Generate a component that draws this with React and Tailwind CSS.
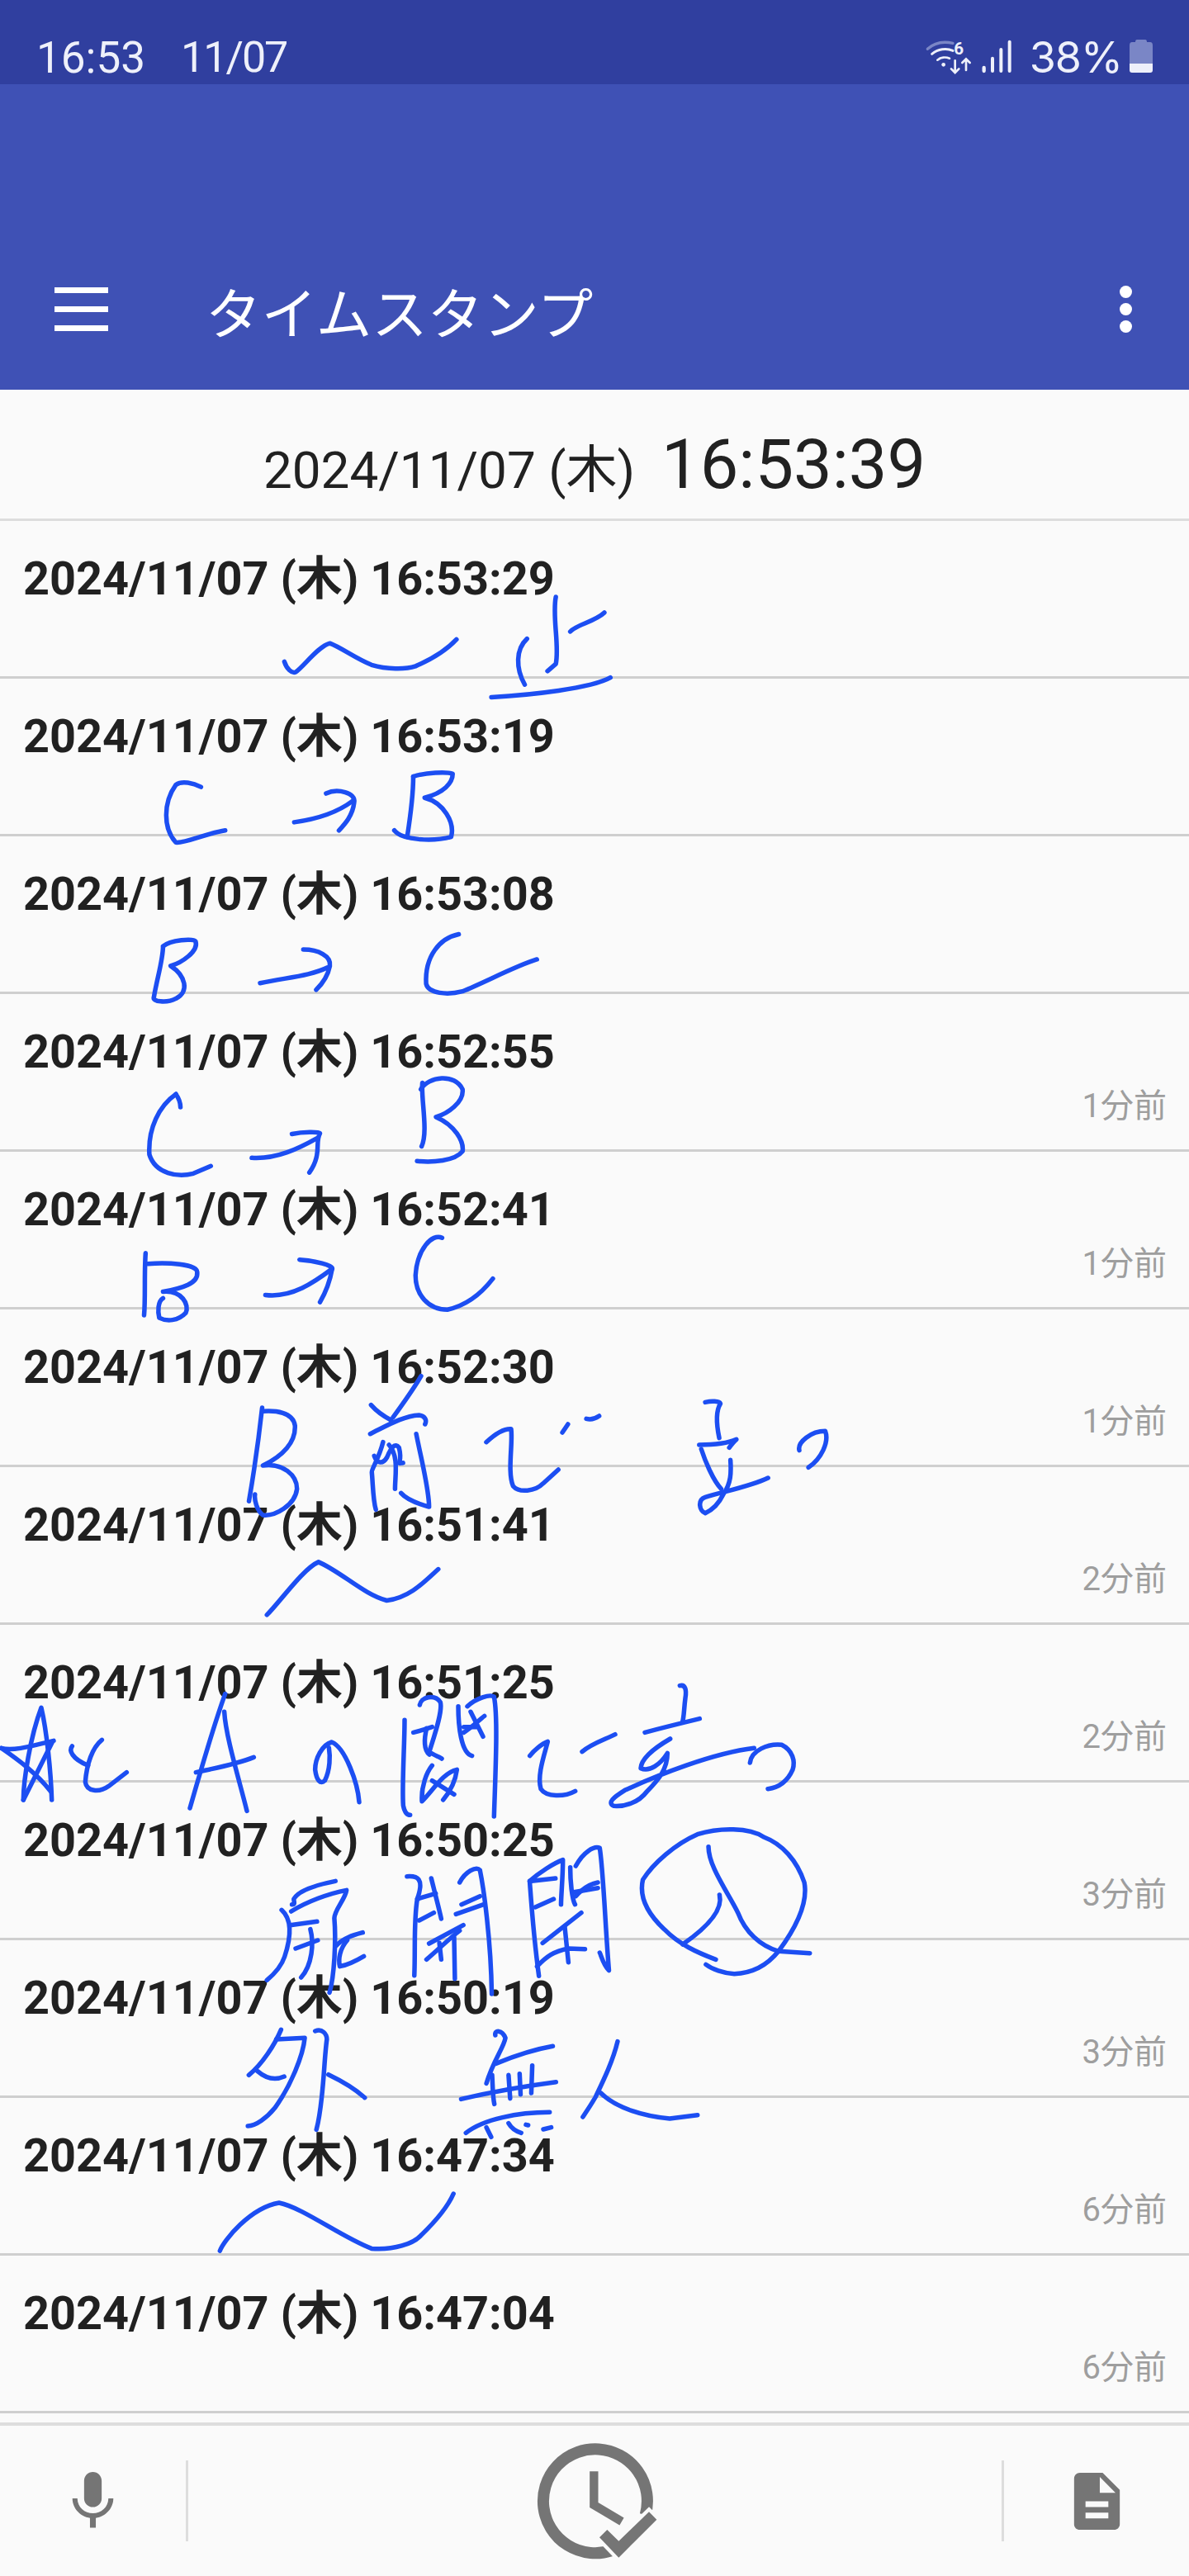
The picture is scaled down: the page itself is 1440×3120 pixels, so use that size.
import React from 'react';

const rows = [
  { time: '16:53:29', ago: '' },
  { time: '16:53:19', ago: '' },
  { time: '16:53:08', ago: '' },
  { time: '16:52:55', ago: '1分前' },
  { time: '16:52:41', ago: '1分前' },
  { time: '16:52:30', ago: '1分前' },
  { time: '16:51:41', ago: '2分前' },
  { time: '16:51:25', ago: '2分前' },
  { time: '16:50:25', ago: '3分前' },
  { time: '16:50:19', ago: '3分前' },
  { time: '16:47:34', ago: '6分前' },
  { time: '16:47:04', ago: '6分前' },
];

// handwriting, traced per crop of the screenshot: [x, y, scaleX, scaleY, paths]
const ink = [
  [0, 640, 1.0889, 2.529, [
    'M375 408 C378 430 385 445 390 440 C400 425 420 360 435 352 C450 365 470 400 490 418 C510 432 535 432 548 422 C570 400 590 370 602 340',
    'M733 210 C728 270 738 360 733 415 L722 437',
    'M695 338 C680 370 680 430 692 478',
    'M752 316 C760 295 785 285 797 258',
    'M648 517 C700 510 780 490 805 457',
    'M265 792 C255 780 240 772 232 785 C215 840 215 920 232 962 C245 965 270 935 297 925',
    'M388 900 C420 890 445 870 465 835',
    'M430 812 C445 795 470 810 467 840 C465 880 455 905 447 925',
    'M545 760 C560 748 590 745 597 752 C597 780 585 810 560 825 C585 840 600 900 595 945 C570 960 530 955 520 925',
    'M545 760 C545 820 540 900 537 945',
    'M215 1280 C225 1260 255 1255 258 1265 C262 1295 240 1330 225 1340 C245 1370 250 1420 232 1440 C220 1455 200 1450 203 1435 C207 1380 215 1320 215 1280',
    'M343 1393 C380 1375 410 1370 432 1345',
    'M400 1290 C420 1290 437 1310 435 1340 C432 1375 425 1395 417 1413',
    'M605 1243 C580 1255 560 1310 562 1395 C565 1425 590 1430 610 1418 C640 1390 680 1340 708 1320',
  ]],
  [0, 1260, 1.0889, 2.529, [
    'M232 165 C235 175 238 190 238 205',
    'M232 165 C210 200 195 270 197 350 C205 410 235 420 255 408 L278 385',
    'M332 360 C365 365 395 330 418 300',
    'M385 287 C400 280 420 280 422 285 C415 310 425 350 408 405',
    'M555 150 C565 110 600 100 610 150 C612 190 590 225 575 235 C600 260 612 310 610 340 C600 370 570 375 550 370',
    'M557 130 C555 180 565 280 556 325',
    'M192 652 C190 720 192 790 190 842',
    'M195 685 C220 680 260 685 260 710 C262 745 240 760 215 770 C240 765 250 810 245 835 C235 860 220 862 210 850 C208 830 208 800 215 790',
    'M350 780 C385 790 415 740 438 700',
    'M395 672 C415 675 440 690 438 700 C435 740 430 770 422 802',
    'M583 605 C570 590 550 640 548 720 C548 780 565 825 590 825 C620 810 640 760 650 730',
  ]],
  [270, 1640, 2.063, 3, [
    'M98 195 C90 300 75 450 65 535',
    'M100 208 C130 205 175 210 180 260 C182 320 150 370 100 405 C150 395 185 440 185 490 C180 550 130 590 100 585 C85 570 78 530 80 510',
    'M495 80 C475 130 450 180 425 230',
    'M370 185 C385 210 400 225 420 240',
    'M368 290 C410 260 450 225 490 222 C505 225 510 240 505 255',
    'M400 320 C390 380 370 420 372 430 C375 480 375 530 382 565',
    'M378 370 C385 400 400 400 410 375 C420 340 430 320 440 340 C450 400 430 400 450 395',
    'M415 330 C440 370 430 440 430 490',
    'M483 290 C495 380 515 490 515 555 C490 545 460 530 445 505',
    'M658 320 C680 290 700 270 720 272 C725 320 710 430 725 480 C740 505 780 500 800 470 L838 420',
    'M848 285 L862 255',
    'M908 235 C920 240 930 235 940 225',
    'M1205 175 C1220 170 1240 170 1243 180 C1230 210 1235 270 1240 305',
    'M1190 330 C1220 330 1260 325 1283 310 C1275 320 1270 330 1265 340',
    'M1195 345 C1205 390 1225 460 1245 490',
    'M1268 385 C1270 430 1270 470 1250 510 C1240 540 1225 565 1205 578 C1190 570 1185 530 1205 520 C1250 500 1320 480 1362 450',
    'M1440 350 C1435 320 1470 280 1505 280 C1515 320 1495 380 1463 412',
  ]],
  [0, 1880, 1.0889, 2.529, [
    'M352 192 C370 150 400 50 420 30 C450 60 480 130 510 148 C540 140 560 90 578 52',
  ]],
  [0, 2030, 3, 3, [
    'M85 450 C85 380 110 220 150 115 C170 200 185 350 188 450',
    'M5 262 C50 275 130 250 195 235',
    'M5 262 C60 300 130 350 185 420',
    'M85 450 C110 400 150 320 190 240',
    'M262 255 C250 270 260 300 320 325',
    'M370 232 C335 260 315 320 310 385 C315 420 360 425 395 400 L460 350',
    'M818 65 C780 170 730 340 690 480',
    'M815 130 C820 220 870 380 897 490',
    'M712 350 C780 335 860 320 922 295',
    'M1305 458 C1300 390 1255 260 1205 240 C1170 250 1145 300 1145 340 C1150 380 1165 395 1180 380 C1200 340 1200 290 1195 260',
  ]],
  [480, 2030, 3, 3, [
    'M30 160 C30 250 20 400 25 470 C30 495 40 505 50 505',
    'M85 105 C90 75 140 65 160 95 C170 130 130 240 120 275 C130 285 160 295 165 300',
    'M62 205 C85 200 115 190 130 185',
    'M110 190 C100 230 100 270 120 285',
    'M225 110 C225 180 235 280 275 290',
    'M258 110 C290 80 340 65 355 75 C370 150 360 350 355 510',
    'M245 205 C270 190 300 160 320 145',
    'M270 130 L315 220',
    'M245 185 L290 185',
    'M130 325 C110 350 90 400 93 455 C130 420 170 350 220 340 C215 380 195 420 170 450',
    'M130 380 L210 430',
    'M485 290 C500 270 530 245 550 238 C540 280 510 360 525 410 C545 440 610 440 650 418',
    'M675 275 C710 245 760 230 795 212',
    'M1030 35 C1050 30 1055 50 1050 80 C1045 120 1045 150 1040 165',
    'M903 205 C960 190 1040 170 1102 155',
    'M995 228 C940 260 890 300 888 335 C920 350 960 320 985 280 C985 340 950 380 910 420 C880 460 830 475 790 472 C765 460 790 440 830 415 C950 360 1150 280 1300 262',
    'M1285 315 C1290 270 1350 245 1400 250 C1440 270 1450 310 1440 340 C1420 385 1390 405 1350 410',
  ]],
  [300, 2200, 2.24, 3, [
    'M238 235 C200 245 140 265 125 300 C125 310 130 320 120 320',
    'M118 345 C160 310 220 280 268 268 C265 300 235 340 235 370 C240 450 235 580 222 640',
    'M92 340 C125 380 115 450 100 510 C90 550 70 575 52 595',
    'M115 395 L188 382',
    'M130 480 L190 450',
    'M170 410 C180 460 175 540 145 585',
    'M240 470 C260 440 290 430 312 422',
    'M270 450 C250 480 245 520 250 545 C270 540 300 520 315 508',
    'M432 218 C460 215 480 225 460 300 C450 380 455 480 452 578',
    'M460 300 L510 280',
    'M465 378 L505 350',
    'M498 225 C510 290 520 340 525 372',
    'M575 240 C590 200 620 180 630 195 C640 260 660 450 662 645',
    'M580 320 L630 290',
    'M565 355 L640 320',
    'M492 462 L585 395',
    'M485 520 C520 480 550 440 575 415',
    'M560 440 L562 590',
    'M520 460 L525 520',
    'M765 235 C790 205 830 170 855 158 C855 220 850 290 850 320',
    'M765 235 C770 330 780 480 790 580',
    'M770 235 L835 225',
    'M780 330 L830 300',
    'M875 185 C875 240 880 300 888 320',
    'M890 180 C910 130 940 105 955 115 C965 200 970 400 980 560 C965 540 960 510 955 495',
    'M890 290 C910 260 930 245 950 240',
    'M885 275 L950 260',
    'M800 460 L905 350',
    'M785 545 C810 510 830 490 870 480 L915 482',
    'M860 400 L870 530',
    'M1270 520 C1220 495 1170 465 1130 410 C1090 360 1060 300 1072 230 C1100 170 1160 100 1220 65 C1280 40 1360 40 1400 75 C1450 100 1490 160 1510 240 C1520 310 1490 400 1440 490 C1410 540 1370 570 1320 572 C1290 570 1260 555 1243 538',
    'M1250 110 C1250 180 1300 270 1330 350 C1350 420 1390 470 1440 490 L1525 497',
    'M1280 285 C1290 340 1250 400 1180 465',
  ]],
  [260, 2380, 2.613, 3, [
    'M210 235 C190 290 150 360 108 400',
    'M135 385 C160 410 190 420 220 405',
    'M195 270 L285 265 C280 330 240 440 190 520 C165 555 130 585 105 585',
    'M318 240 C340 230 355 250 355 270 C345 350 345 500 322 598',
    'M360 398 C400 420 440 445 475 482',
    'M888 255 C885 235 910 235 920 265 C915 300 880 350 860 430',
    'M890 358 C950 330 1020 305 1070 295',
    'M780 487 C880 460 980 440 1080 425',
    'M878 400 C880 440 880 480 885 505',
    'M930 400 L935 485',
    'M965 395 L968 470',
    'M1005 365 L1002 465',
    'M795 610 C850 560 960 535 1060 535',
    'M860 590 L875 625',
    'M930 575 C940 595 955 605 970 610',
    'M985 580 L992 582',
    'M1040 597 L1065 590',
    'M1275 278 C1260 350 1230 420 1205 480 C1190 510 1175 535 1165 552',
    'M1222 465 C1270 520 1360 550 1440 558 L1528 545',
  ]],
  [0, 2500, 1.0889, 2.529, [
    'M290 572 C295 540 330 440 368 425 C400 440 450 530 490 565 C520 570 545 550 555 525 C575 480 590 440 598 397',
  ]],
];

const StatusIcons = () => (
  <svg width="110" height="60" viewBox="120 60 330 180" className="shrink-0">
    <g fill="none" stroke="#eef0fa" strokeLinecap="round">
      <path d="M130 118 C155 95 190 90 222 97" stroke="#7a86c6" strokeWidth="10" />
      <path d="M146 136 C168 118 198 114 222 124" strokeWidth="9" />
      <path d="M166 158 C178 148 196 146 210 152" strokeWidth="8" />
      <path d="M230 160 L230 202 M216 190 L230 204 L244 190" strokeWidth="8" />
      <path d="M270 195 L270 156 M256 168 L270 154 L284 168" strokeWidth="8" />
      <path d="M335 186 L335 198" strokeWidth="13" />
      <path d="M366 152 L366 198" strokeWidth="12" />
      <path d="M397 120 L397 198" strokeWidth="12" />
      <path d="M428 92 L428 198" strokeWidth="12" />
    </g>
    <circle cx="188" cy="175" r="7" fill="#eef0fa" />
    <text x="226" y="138" fontSize="62" fontWeight="700" fill="#eef0fa" fontFamily="Roboto, sans-serif">6</text>
  </svg>
);

const Battery = () => (
  <svg width="28" height="40" viewBox="0 0 28 40" className="mb-[4px]">
    <path d="M9 0 H19 Q21 0 21 3 H25 Q28 3 28 7 V29 H0 V7 Q0 3 3 3 H7 Q7 0 9 0 Z" fill="#7a86c6" />
    <path d="M0 29 H28 V37 Q28 40 25 40 H3 Q0 40 0 37 Z" fill="#eef0fa" />
  </svg>
);

const ClockCheck = () => (
  <svg width="200" height="182" viewBox="0 24 600 546">
    <path d="M360 477 A189 189 0 1 1 482 348" fill="none" stroke="#757575" strokeWidth="42" />
    <path d="M295 190 V312 L396 372" fill="none" stroke="#757575" strokeWidth="31" />
    <path d="M315 430 L343 402 L385 443 L495 337 L523 365 L385 503 Z" fill="#757575" stroke="#fafafa" strokeWidth="26" paintOrder="stroke" />
  </svg>
);

export default function App() {
  return (
    <div className="relative flex h-[3120px] w-[1440px] flex-col overflow-hidden bg-[#fafafa] font-[Roboto,'Noto_Sans_CJK_JP',sans-serif] text-[#212121]">
      <div className="flex h-[102px] items-center justify-between bg-[#303f9f] pt-[38px] pl-[44px] pr-[44px] text-[52px] leading-[60px] text-[#eef0fa]">
        <div className="flex gap-[43px]">
          <span className="text-[53px]">16:53</span>
          <span className="tracking-[-2px]">11/07</span>
        </div>
        <div className="flex items-center">
          <StatusIcons />
          <span className="ml-[17px] mr-[9px] font-[Inter,sans-serif] tracking-[-1px]">38%</span>
          <Battery />
        </div>
      </div>

      <div className="flex h-[370px] flex-col justify-end bg-[#3f51b5] text-white">
        <div className="flex h-[196px] items-center pl-[66px] pr-[69px]">
          <div className="flex w-[65px] flex-col gap-[16px]">
            <div className="h-[7px] bg-white" />
            <div className="h-[7px] bg-white" />
            <div className="h-[7px] bg-white" />
          </div>
          <div className="ml-[118px] flex-1 pt-[16px] text-[67.5px] leading-none">タイムスタンプ</div>
          <div className="flex flex-col gap-[6px]">
            <div className="size-[15px] rounded-full bg-white" />
            <div className="size-[15px] rounded-full bg-white" />
            <div className="size-[15px] rounded-full bg-white" />
          </div>
        </div>
      </div>

      <div className="flex h-[159px] items-baseline justify-center gap-[32px] border-b-[3px] border-[#dddddd] pt-[49px] leading-none">
        <span className="text-[62px]">2024/11/07 (木)</span>
        <span className="text-[83px]">16:53:39</span>
      </div>

      <div>
        {rows.map((row) => (
          <div key={row.time} className="h-[191px] border-b-[3px] border-[#cfcfcf] pl-[28px] pr-[27px] pt-[42px]">
            <div className="text-[55.8px] font-bold leading-[56px]">2024/11/07 (木) {row.time}</div>
            <div className="mt-[18px] h-[40px] text-right text-[40px] leading-[40px] text-[#9e9e9e]">{row.ago}</div>
          </div>
        ))}
      </div>

      <div className="mt-[11px] flex flex-1 items-center border-t-4 border-[#dddddd] text-[#757575]">
        <div className="flex w-[225px] justify-center">
          <svg width="85" height="85" viewBox="0 0 24 24" fill="currentColor">
            <path d="M12 14c1.66 0 3-1.34 3-3V5c0-1.66-1.34-3-3-3S9 3.34 9 5v6c0 1.66 1.34 3 3 3zm5.3-3c0 3-2.54 5.1-5.3 5.1S6.7 14 6.7 11H5c0 3.41 2.72 6.23 6 6.72V21h2v-3.28c3.28-.48 6-3.3 6-6.72h-1.7z" />
          </svg>
        </div>
        <div className="h-[98px] w-[3px] bg-[#dddddd]" />
        <div className="flex flex-1 justify-center">
          <ClockCheck />
        </div>
        <div className="h-[98px] w-[3px] bg-[#dddddd]" />
        <div className="flex w-[224px] justify-center">
          <svg width="83" height="83" viewBox="0 0 24 24" fill="currentColor">
            <path d="M14 2H6c-1.1 0-1.99.9-1.99 2L4 20c0 1.1.89 2 1.99 2H18c1.1 0 2-.9 2-2V8l-6-6zm2 16H8v-2h8v2zm0-4H8v-2h8v2zm-3-5V3.5L18.5 9H13z" />
          </svg>
        </div>
      </div>

      <svg className="pointer-events-none absolute inset-0" width="1440" height="3120" fill="none" stroke="#1c4ef2" strokeWidth="5.5" strokeLinecap="round" strokeLinejoin="round">
        {ink.map(([x, y, sx, sy, paths]) => (
          <g key={`${x}-${y}`} transform={`translate(${x} ${y}) scale(${1 / sx} ${1 / sy})`}>
            {paths.map((d) => (
              <path key={d} d={d} vectorEffect="non-scaling-stroke" />
            ))}
          </g>
        ))}
      </svg>
    </div>
  );
}
